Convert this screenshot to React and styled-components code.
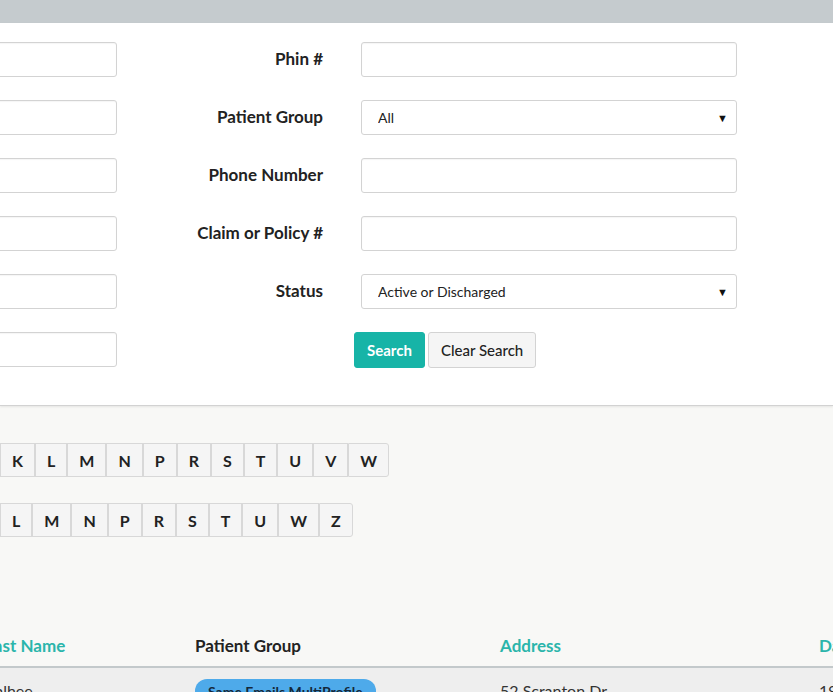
import React from 'react';
import styled, { createGlobalStyle } from 'styled-components';

const GlobalStyle = createGlobalStyle`
    html, body {
        margin: 0;
        background: #f8f8f6;
        font-family: Lato, "Open Sans", sans-serif;
        color: #222;
        overflow: hidden;
    }
`;

const rowOne = ['K', 'L', 'M', 'N', 'P', 'R', 'S', 'T', 'U', 'V', 'W'];
const rowTwo = ['L', 'M', 'N', 'P', 'R', 'S', 'T', 'U', 'W', 'Z'];

const fields = [
    { label: 'Phin #' },
    { label: 'Patient Group', select: 'All' },
    { label: 'Phone Number' },
    { label: 'Claim or Policy #' },
    { label: 'Status', select: 'Active or Discharged' },
];

const App = () => {
    return (
        <>
            <GlobalStyle />
            <TopBar />
            <FormPanel>
                <FormGrid>
                    {fields.map(f => (
                        <React.Fragment key={f.label}>
                            <TextInput />
                            <Label>{f.label}</Label>
                            {f.select ? (
                                <SelectBox>
                                    <select defaultValue={f.select}>
                                        <option>{f.select}</option>
                                    </select>
                                    <Caret>▼</Caret>
                                </SelectBox>
                            ) : (
                                <TextInput />
                            )}
                        </React.Fragment>
                    ))}
                    <TextInput />
                    <span />
                    <Actions>
                        <Button primary>Search</Button>
                        <Button>Clear Search</Button>
                    </Actions>
                </FormGrid>
            </FormPanel>

            <Letters>
                <LetterGroup>
                    {rowOne.map(l => <Letter key={l}>{l}</Letter>)}
                </LetterGroup>
                <LetterGroup>
                    {rowTwo.map(l => <Letter key={l}>{l}</Letter>)}
                </LetterGroup>
            </Letters>

            <Table>
                <HeadRow>
                    <HeadCell sortable>Last Name</HeadCell>
                    <HeadCell>Patient Group</HeadCell>
                    <HeadCell sortable>Address</HeadCell>
                    <HeadCell sortable>Date of Birth</HeadCell>
                </HeadRow>
                <BodyRow>
                    <Cell>Balhee</Cell>
                    <Cell><Badge>Same Emails MultiProfile</Badge></Cell>
                    <Cell>52 Scranton Dr</Cell>
                    <Cell>1984-05-12</Cell>
                </BodyRow>
            </Table>
        </>
    )
}

export default App

const TopBar = styled.div`
    height: 23px;
    background: #c5cbce;
`;

const FormPanel = styled.div`
    box-sizing: border-box;
    height: 383px;
    padding-top: 19px;
    background: #fff;
    border-bottom: 1px solid #d2d2d2;
    box-shadow: 0 1px 2px rgba(0, 0, 0, 0.08);
`;

const FormGrid = styled.div`
    display: grid;
    grid-template-columns: 317px 244px 376px;
    grid-auto-rows: 35px;
    row-gap: 23px;
    margin-left: -200px;
    align-items: center;
`;

const TextInput = styled.input`
    box-sizing: border-box;
    width: 100%;
    height: 35px;
    border: 1px solid #d3d3d3;
    border-radius: 3px;
    background: #fff;
    box-shadow: inset 0 1px 1px rgba(0, 0, 0, 0.04);
    outline: none;
`;

const Label = styled.label`
    text-align: right;
    padding-right: 38px;
    margin-top: -2px;
    font-size: 17px;
    font-weight: 700;
    color: #222;
`;

const SelectBox = styled.div`
    box-sizing: border-box;
    display: flex;
    align-items: center;
    height: 35px;
    padding: 0 6px 0 16px;
    border: 1px solid #d3d3d3;
    border-radius: 3px;
    background: #fff;

    select {
        flex: 1;
        appearance: none;
        border: none;
        background: transparent;
        font-family: Lato, sans-serif;
        font-size: 14px;
        color: #222;
        outline: none;
        padding: 0;
    }
`;

const Caret = styled.span`
    font-size: 11px;
    color: #111;
    padding-right: 2px;
`;

const Actions = styled.div`
    display: flex;
    gap: 3px;
    margin-left: -7px;
`;

const Button = styled.button`
    height: 36px;
    padding: 0 12px;
    border-radius: 3px;
    font-family: Lato, sans-serif;
    font-size: 15px;
    font-weight: ${p => (p.primary ? 700 : 500)};
    color: ${p => (p.primary ? '#fff' : '#222')};
    background: ${p => (p.primary ? '#17b4a7' : '#f5f5f5')};
    border: 1px solid ${p => (p.primary ? '#17b4a7' : '#d3d3d3')};
`;

const Letters = styled.div`
    display: flex;
    flex-direction: column;
    align-items: flex-start;
    gap: 26px;
    padding-top: 37px;
`;

const LetterGroup = styled.div`
    display: flex;
`;

const Letter = styled.button`
    box-sizing: border-box;
    height: 34px;
    padding: 0 11px;
    border: 1px solid #d8d8d8;
    background: #f5f5f5;
    font-family: Lato, sans-serif;
    font-size: 16px;
    font-weight: 700;
    color: #222;

    &:last-child {
        border-radius: 0 3px 3px 0;
    }
`;

const Table = styled.div`
    margin-top: 94px;
    margin-left: -15px;
`;

const columns = '210px 305px 319px 1fr';

const HeadRow = styled.div`
    display: grid;
    grid-template-columns: ${columns};
    box-sizing: border-box;
    height: 37px;
    padding-top: 4px;
    align-items: start;
    border-bottom: 2px solid #c3c9cb;
`;

const HeadCell = styled.div`
    font-size: 17px;
    font-weight: 700;
    white-space: nowrap;
    color: ${p => (p.sortable ? '#2bb5ab' : '#222')};
`;

const BodyRow = styled.div`
    display: grid;
    grid-template-columns: ${columns};
    align-items: start;
    padding-top: 10px;
    height: 60px;
    background: #eeeeee;
`;

const Cell = styled.div`
    font-size: 16px;
    color: #333;
    white-space: nowrap;
    line-height: 20px;
    padding-top: 3px;
`;

const Badge = styled.span`
    display: inline-block;
    margin-top: -3px;
    padding: 3px 13px;
    border-radius: 12px;
    background: #4eaaea;
    color: #14283a;
    font-size: 14px;
    font-weight: 700;
`;
